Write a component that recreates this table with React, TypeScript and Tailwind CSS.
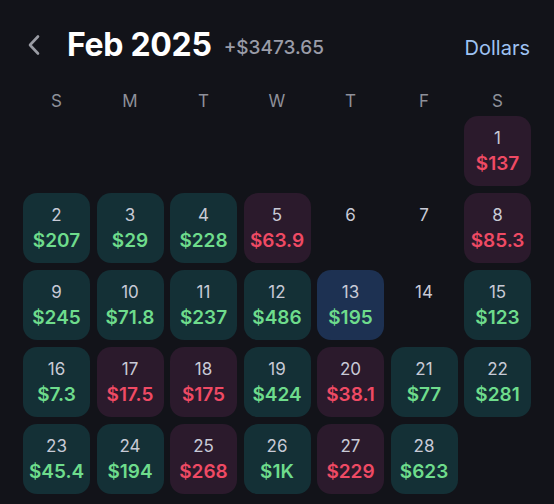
import React from 'react';

type Day = { d: number; amt?: string; kind?: 'up' | 'down' | 'today' };

const days: (Day | null)[] = [
  null, null, null, null, null, null,
  { d: 1, amt: '$137', kind: 'down' },
  { d: 2, amt: '$207', kind: 'up' },
  { d: 3, amt: '$29', kind: 'up' },
  { d: 4, amt: '$228', kind: 'up' },
  { d: 5, amt: '$63.9', kind: 'down' },
  { d: 6 },
  { d: 7 },
  { d: 8, amt: '$85.3', kind: 'down' },
  { d: 9, amt: '$245', kind: 'up' },
  { d: 10, amt: '$71.8', kind: 'up' },
  { d: 11, amt: '$237', kind: 'up' },
  { d: 12, amt: '$486', kind: 'up' },
  { d: 13, amt: '$195', kind: 'today' },
  { d: 14 },
  { d: 15, amt: '$123', kind: 'up' },
  { d: 16, amt: '$7.3', kind: 'up' },
  { d: 17, amt: '$17.5', kind: 'down' },
  { d: 18, amt: '$175', kind: 'down' },
  { d: 19, amt: '$424', kind: 'up' },
  { d: 20, amt: '$38.1', kind: 'down' },
  { d: 21, amt: '$77', kind: 'up' },
  { d: 22, amt: '$281', kind: 'up' },
  { d: 23, amt: '$45.4', kind: 'up' },
  { d: 24, amt: '$194', kind: 'up' },
  { d: 25, amt: '$268', kind: 'down' },
  { d: 26, amt: '$1K', kind: 'up' },
  { d: 27, amt: '$229', kind: 'down' },
  { d: 28, amt: '$623', kind: 'up' },
];

const weekdays = ['S', 'M', 'T', 'W', 'T', 'F', 'S'];

function Cell({ day }: { day: Day | null }) {
  if (!day) return <div className="h-[70px]" />;
  const bg =
    day.kind === 'up'
      ? 'bg-[#143036]'
      : day.kind === 'down'
      ? 'bg-[#2b1a2c]'
      : day.kind === 'today'
      ? 'bg-[#1d3152]'
      : '';
  const amtColor = day.kind === 'down' ? 'text-[#ef4a64]' : 'text-[#6edc8c]';
  return (
    <div className={`h-[70px] rounded-[14px] flex flex-col items-center pt-[11px] ${bg}`}>
      <span className="text-[17px] leading-[22px] text-[#c8cad6]">{day.d}</span>
      {day.amt && (
        <span className={`mt-[3px] text-[19px] leading-[24px] font-semibold ${amtColor}`}>{day.amt}</span>
      )}
    </div>
  );
}

export default function App() {
  return (
    <div className="w-[554px] h-[504px] overflow-hidden bg-[#121319] font-['Inter',sans-serif]">
      {/* Header */}
      <div className="flex items-center h-[50px] mt-[20px] pl-[27px] pr-[24px]">
        <svg width="14" height="22" viewBox="0 0 14 22" fill="none" className="mr-[26px]">
          <path d="M11 2.5 L3 11 L11 19.5" stroke="#9a9ca4" strokeWidth="2.6" strokeLinecap="round" strokeLinejoin="round" />
        </svg>
        <span className="text-[32px] font-bold text-white tracking-[-0.3px]">Feb 2025</span>
        <span className="ml-[12px] mt-[6px] text-[19px] font-medium text-[#9a9ca8]">+$3473.65</span>
        <span className="ml-auto mt-[6px] text-[20px] text-[#9ec2f2]">Dollars</span>
      </div>

      {/* Weekdays */}
      <div className="grid grid-cols-7 gap-x-[6.5px] px-[23px] mt-[19px] h-[26px] items-center">
        {weekdays.map((w, i) => (
          <span key={i} className="text-center text-[17px] text-[#8e9099]">{w}</span>
        ))}
      </div>

      {/* Grid */}
      <div className="grid grid-cols-7 gap-x-[6.5px] gap-y-[7px] px-[23px] mt-[1px]">
        {days.map((d, i) => (
          <Cell key={i} day={d} />
        ))}
      </div>
    </div>
  );
}
